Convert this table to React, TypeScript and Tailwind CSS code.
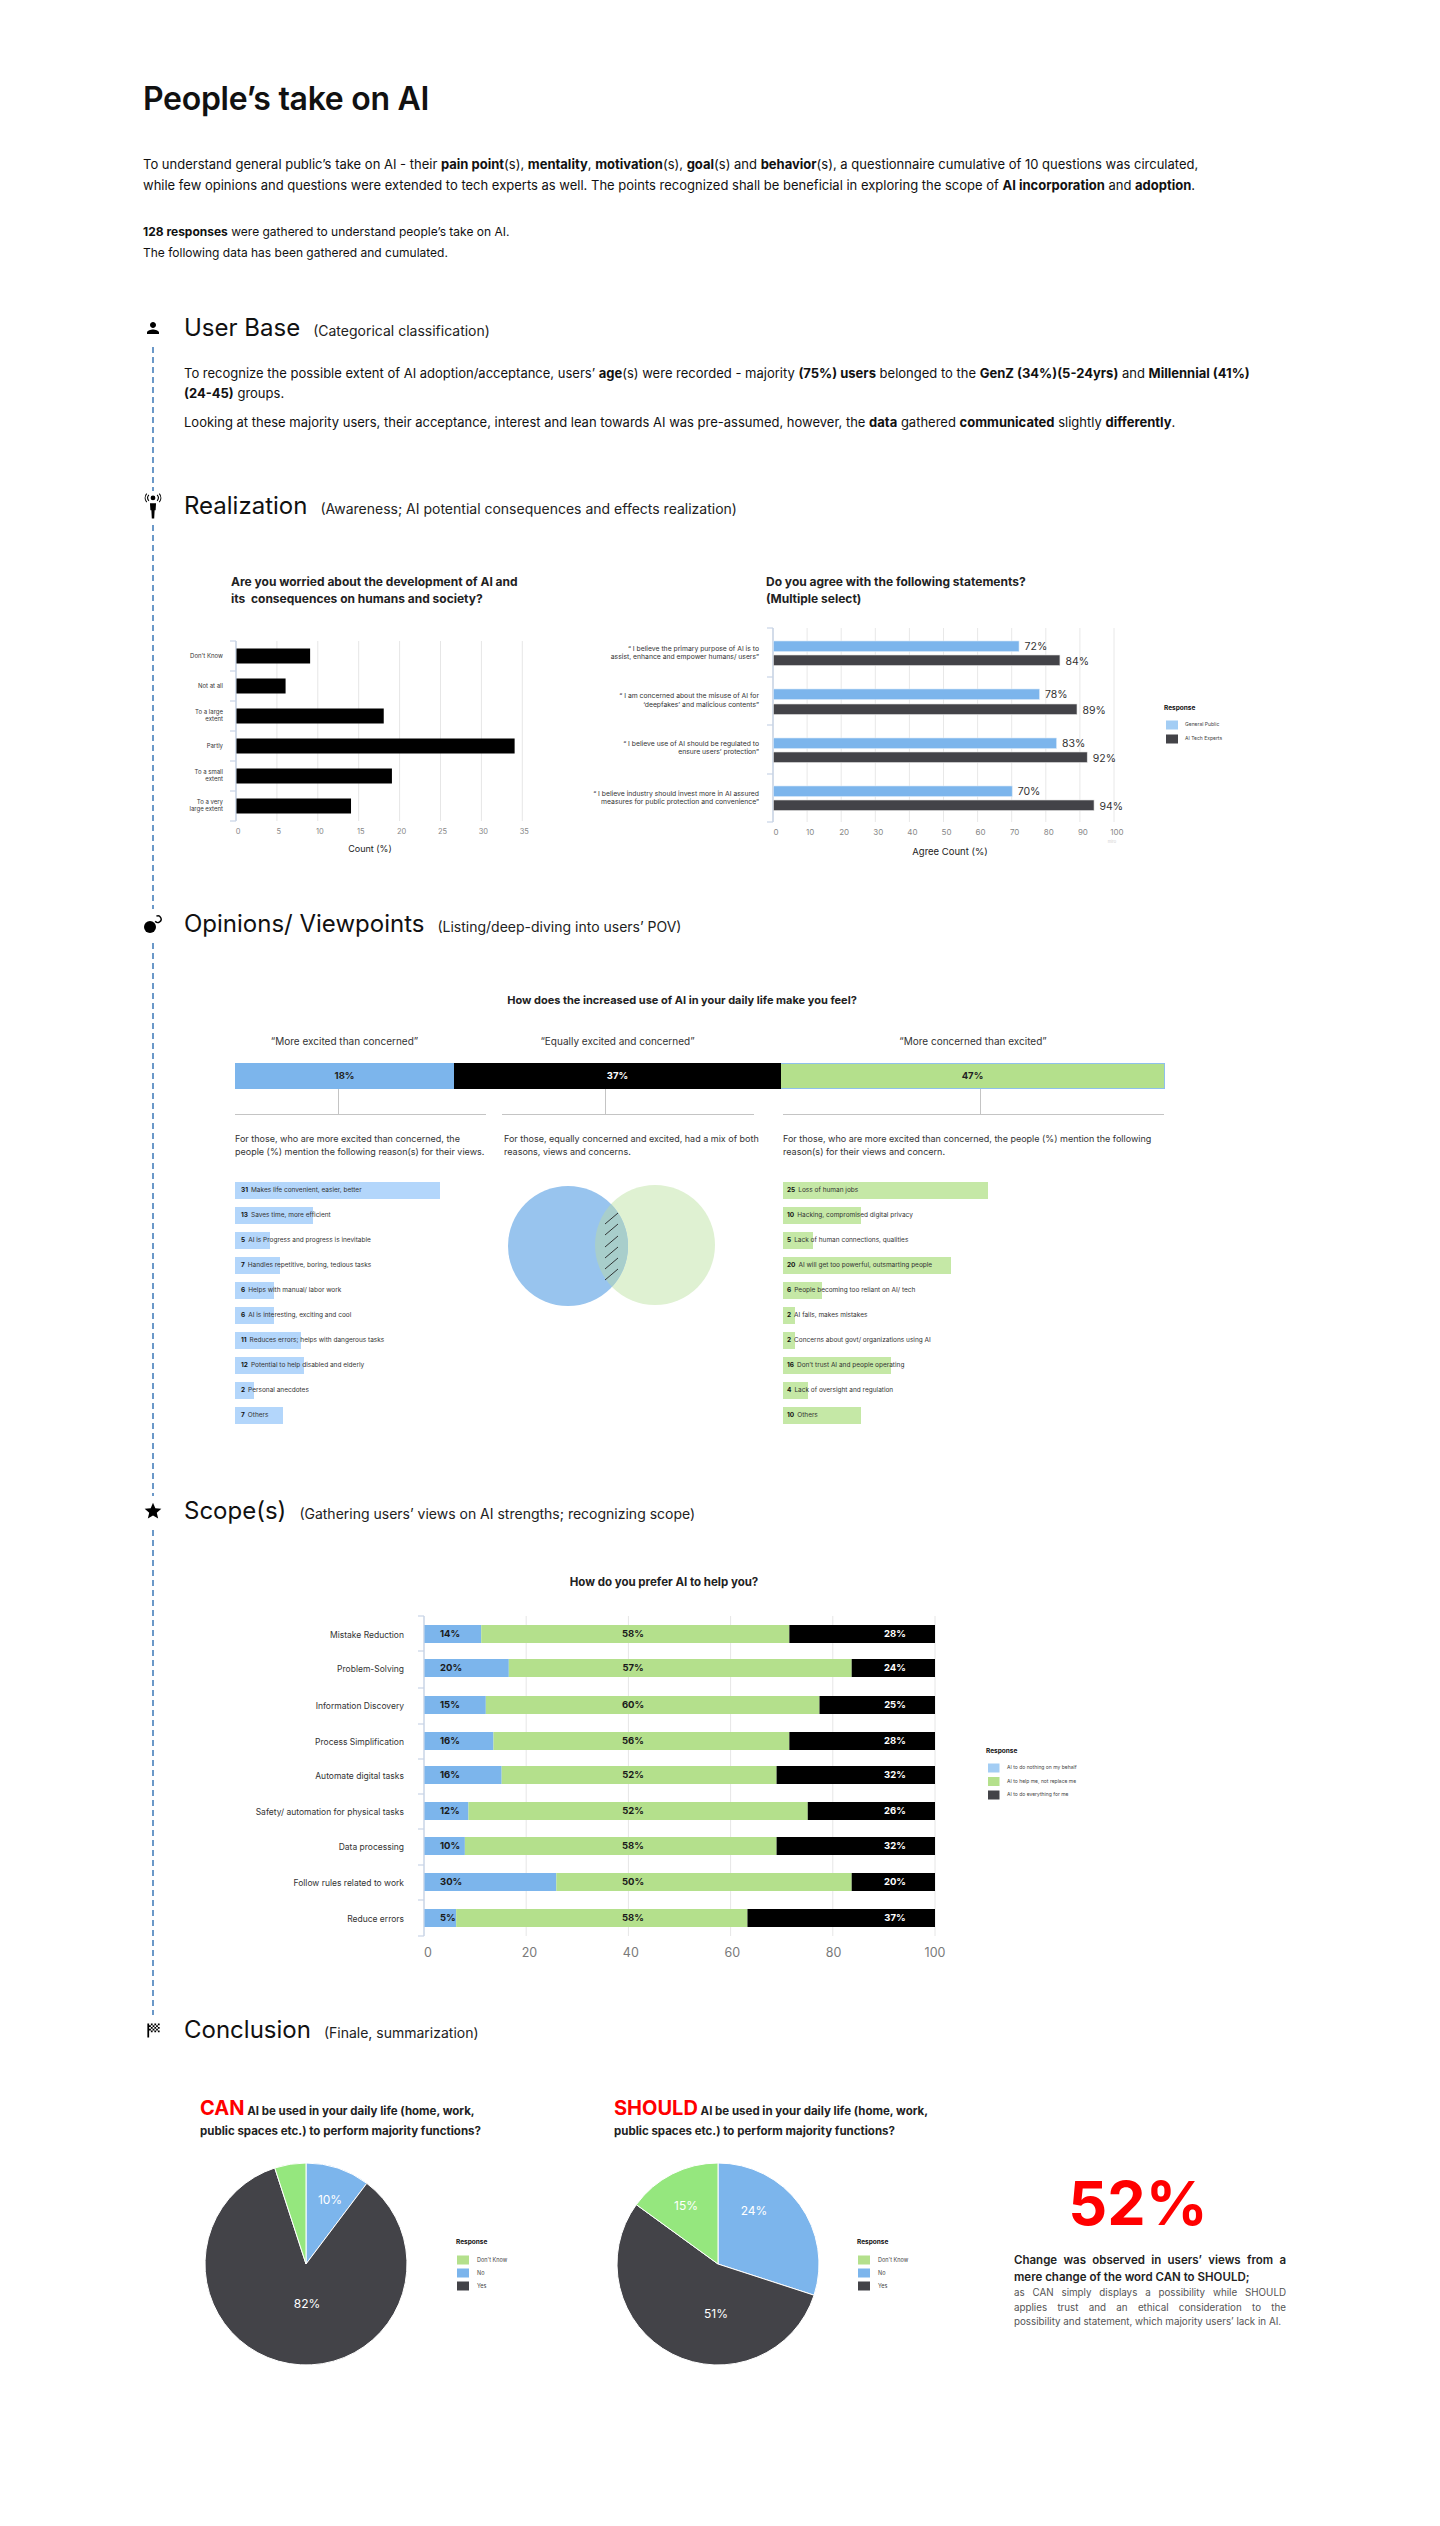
import React from "react";

const arc = (cx: number, cy: number, r: number, a0: number, a1: number) => {
  const pt = (a: number) => [cx + r * Math.sin((a * Math.PI) / 180), cy - r * Math.cos((a * Math.PI) / 180)];
  const [x0, y0] = pt(a0);
  const [x1, y1] = pt(a1);
  const large = a1 - a0 > 180 ? 1 : 0;
  return `M${cx},${cy} L${x0},${y0} A${r},${r} 0 ${large} 1 ${x1},${y1} Z`;
};

const PersonIcon = () => (
  <svg width="18" height="18" viewBox="0 0 24 24" fill="#000">
    <path d="M12 12c2.21 0 4-1.790 4-4s-1.79-4-4-4-4 1.79-4 4 1.79 4 4 4zm0 2c-2.67 0-8 1.34-8 4v2h16v-2c0-2.66-5.330-4-8-4z" />
  </svg>
);

const SignalPersonIcon = () => (
  <svg width="22" height="26" viewBox="0 0 20 24" fill="none">
    <circle cx="10" cy="4.5" r="2.2" fill="#000" />
    <path d="M6.2 1.8a4 4 0 0 0 0 5.4M4.2 0.6a6 6 0 0 0 0 7.8M13.8 1.8a4 4 0 0 1 0 5.4M15.8 0.6a6 6 0 0 1 0 7.8" stroke="#000" strokeWidth="1" />
    <path d="M7.2 9.5h5.6l-0.4 6.5h-0.9l-0.4 7.5h-2.2l-0.4-7.5h-0.9z" fill="#000" />
  </svg>
);

const BubbleIcon = () => (
  <svg width="20" height="20" viewBox="0 0 20 20" fill="none">
    <circle cx="7" cy="13" r="6" fill="#000" />
    <path d="M12.2 7.2a3.3 3.3 0 1 0 1.2-5" stroke="#000" strokeWidth="1.4" />
  </svg>
);

const StarIcon = () => (
  <svg width="20" height="20" viewBox="0 0 24 24" fill="#000">
    <path d="M12 17.27L18.18 21l-1.64-7.03L22 9.24l-7.19-.61L12 2 9.19 8.63 2 9.24l5.46 4.73L5.82 21z" />
  </svg>
);

const FlagIcon = () => (
  <svg width="21" height="21" viewBox="0 0 24 24" fill="#000">
    <path d="M11 6H9V4h2v2zm4-2h-2v2h2V4zM9 14h2v-2H9v2zm10-4V8h-2v2h2zm0 4v-2h-2v2h2zm-6 0h2v-2h-2v2zm6-10h-2v2h2V4zm-6 4V6h-2v2h2zM7 10V8h2V6H7V4H5v16h2v-8h2v-2H7zm8 2h2v-2h-2v2zm-4-2v2h2v-2h-2zM9 8v2h2V8H9zm4 2h2V8h-2v2zm2-4v2h2V6h-2z" />
  </svg>
);

function Section({ icon, last, children }: { icon: React.ReactNode; last?: boolean; children: React.ReactNode }) {
  return (
    <div className="flex">
      <div className="w-[20px] shrink-0 flex flex-col items-center">
        <div className="h-[30px] flex items-center justify-center">{icon}</div>
        {!last && (
          <div className="flex-1 mt-[4px] w-[1.5px] bg-[repeating-linear-gradient(to_bottom,#6b98c8_0px,#6b98c8_6px,transparent_6px,transparent_10px)]" />
        )}
      </div>
      <div className="ml-[21px] flex-1">{children}</div>
    </div>
  );
}

function Heading({ title, sub }: { title: string; sub: string }) {
  return (
    <div className="flex items-baseline gap-[13px] h-[30px]">
      <h2 className="text-[24px] leading-[30px] font-normal text-[#111]">{title}</h2>
      <span className="text-[14px] text-[#222]">{sub}</span>
    </div>
  );
}

const worried = [
  { l: ["Don't Know"], v: 9 },
  { l: ["Not at all"], v: 6 },
  { l: ["To a large", "extent"], v: 18 },
  { l: ["Partly"], v: 34 },
  { l: ["To a small", "extent"], v: 19 },
  { l: ["To a very", "large extent"], v: 14 },
];

const agree = [
  { l: ["“ I believe the primary purpose of AI is to", "assist, enhance and empower humans/ users”"], g: 72, e: 84, bt: 641, dt: 655, ly: [649, 657] },
  { l: ["“ I am concerned about the misuse of AI for", "‘deepfakes’ and malicious contents”"], g: 78, e: 89, bt: 689, dt: 704, ly: [696, 705] },
  { l: ["“ I believe use of AI should be regulated to", "ensure users’ protection”"], g: 83, e: 92, bt: 738, dt: 752, ly: [744, 752] },
  { l: ["“ I believe industry should invest more in AI assured", "measures for public protection and convenience”"], g: 70, e: 94, bt: 786, dt: 800, ly: [794, 802] },
];

const excited: [number, string, number][] = [
  [31, "Makes life convenient, easier, better", 205],
  [13, "Saves time, more efficient", 78],
  [5, "AI is Progress and progress is inevitable", 35],
  [7, "Handles repetitive, boring, tedious tasks", 45],
  [6, "Helps with manual/ labor work", 39],
  [6, "AI is interesting, exciting and cool", 39],
  [11, "Reduces errors; helps with dangerous tasks", 66],
  [12, "Potential to help disabled and elderly", 69],
  [2, "Personal anecdotes", 19],
  [7, "Others", 48],
];

const concerned: [number, string, number][] = [
  [25, "Loss of human jobs", 205],
  [10, "Hacking, compromised digital privacy", 78],
  [5, "Lack of human connections, qualities", 30],
  [20, "AI will get too powerful, outsmarting people", 168],
  [6, "People becoming too reliant on AI/ tech", 39],
  [2, "AI fails, makes mistakes", 12],
  [2, "Concerns about govt/ organizations using AI", 12],
  [16, "Don’t trust AI and people operating", 108],
  [4, "Lack of oversight and regulation", 25],
  [10, "Others", 78],
];

const scope: { l: string; b: number; g: number; t: number; p: [string, string, string] }[] = [
  { l: "Mistake Reduction", b: 11.1, g: 71.4, t: 1625, p: ["14%", "58%", "28%"] },
  { l: "Problem-Solving", b: 16.5, g: 83.6, t: 1659, p: ["20%", "57%", "24%"] },
  { l: "Information Discovery", b: 12.0, g: 77.3, t: 1696, p: ["15%", "60%", "25%"] },
  { l: "Process Simplification", b: 13.5, g: 71.4, t: 1732, p: ["16%", "56%", "28%"] },
  { l: "Automate digital tasks", b: 15.1, g: 68.9, t: 1766, p: ["16%", "52%", "32%"] },
  { l: "Safety/ automation for physical tasks", b: 8.6, g: 75.0, t: 1802, p: ["12%", "52%", "26%"] },
  { l: "Data processing", b: 7.9, g: 68.9, t: 1837, p: ["10%", "58%", "32%"] },
  { l: "Follow rules related to work", b: 25.8, g: 83.6, t: 1873, p: ["30%", "50%", "20%"] },
  { l: "Reduce errors", b: 6.2, g: 63.2, t: 1909, p: ["5%", "58%", "37%"] },
];

function ReasonList({ items, color, pad }: { items: [number, string, number][]; color: string; pad: string }) {
  return (
    <div className="mt-[24px] flex flex-col gap-[8px]">
      {items.map(([n, label, w], i) => (
        <div
          key={i}
          style={{ width: w, backgroundColor: color }}
          className={`h-[17px] flex items-center whitespace-nowrap text-[6.5px] text-[#333] ${pad}`}
        >
          <span className="font-bold text-[#111] mr-[3px]">{n}</span>
          {label}
        </div>
      ))}
    </div>
  );
}

function PieLegend({ x }: { x: number }) {
  const rows = [
    ["Don't Know", "#b4e08c"],
    ["No", "#7cb5ec"],
    ["Yes", "#434348"],
  ];
  return (
    <g fontFamily="Inter, sans-serif">
      <text x={x - 1} y={2239} fontSize="6.5" fontWeight="700" fill="#111" dominantBaseline="middle">Response</text>
      {rows.map(([t, c], i) => (
        <g key={t}>
          <rect x={x} y={2252.5 + i * 13} width="12" height="9" fill={c} />
          <text x={x + 20} y={2257 + i * 13} fontSize="5.5" fill="#444" dominantBaseline="middle">{t}</text>
        </g>
      ))}
    </g>
  );
}

export default function App() {
  return (
    <div className="w-[1440px] min-h-[2526px] bg-white text-[#111] font-['Inter','Noto_Sans',sans-serif]">
      <div className="pl-[143px] pt-[80px]">
        <h1 className="text-[32px] leading-[38px] font-semibold tracking-[-0.3px]">People’s take on AI</h1>
        <p className="mt-[36px] text-[13px] leading-[21px]">
          To understand general public’s take on AI - their <b>pain point</b>(s), <b>mentality</b>, <b>motivation</b>(s),{" "}
          <b>goal</b>(s) and <b>behavior</b>(s), a questionnaire cumulative of 10 questions was circulated,
          <br />
          while few opinions and questions were extended to tech experts as well. The points recognized shall be beneficial in
          exploring the scope of <b>AI incorporation</b> and <b>adoption</b>.
        </p>
        <p className="mt-[25px] text-[12px] leading-[21px]">
          <b>128 responses</b> were gathered to understand people’s take on AI.
          <br />
          The following data has been gathered and cumulated.
        </p>

        <div className="mt-[50px]">
          {/* User Base */}
          <Section icon={<PersonIcon />}>
            <div className="pb-[59px]">
              <Heading title="User Base" sub="(Categorical classification)" />
              <p className="mt-[20px] text-[13px] leading-[20px]">
                To recognize the possible extent of AI adoption/acceptance, users’ <b>age</b>(s) were recorded - majority{" "}
                <b>(75%) users</b> belonged to the <b>GenZ (34%)(5-24yrs)</b> and <b>Millennial (41%)</b>
                <br />
                <b>(24-45)</b> groups.
              </p>
              <p className="mt-[9px] text-[13px] leading-[20px]">
                Looking at these majority users, their acceptance, interest and lean towards AI was pre-assumed, however, the{" "}
                <b>data</b> gathered <b>communicated</b> slightly <b>differently</b>.
              </p>
            </div>
          </Section>

          {/* Realization */}
          <Section icon={<SignalPersonIcon />}>
            <div className="pb-[44px]">
              <Heading title="Realization" sub="(Awareness; AI potential consequences and effects realization)" />
              <div className="mt-[52px] flex">
                <div className="w-[401px]">
                  <div className="ml-[47px] text-[12px] leading-[17px] font-bold text-[#222]">
                    Are you worried about the development of AI and
                    <br />
                    its&nbsp; consequences on humans and society?
                  </div>
                  <svg className="mt-[18px] block" width="401" height="240" viewBox="184 625 401 240" fontFamily="Inter, sans-serif">
                    {[0, 5, 10, 15, 20, 25, 30, 35].map((v) => (
                      <line key={v} x1={236 + v * 8.18} x2={236 + v * 8.18} y1={641} y2={821} stroke="#e6e6e6" />
                    ))}
                    <line x1={236} x2={236} y1={641} y2={821} stroke="#c8d4e6" strokeWidth="1.5" />
                    {[641, 671, 701, 731, 761, 791, 821].map((y) => (
                      <line key={y} x1={230} x2={236} y1={y} y2={y} stroke="#c8d4e6" strokeWidth="1.2" />
                    ))}
                    {worried.map((r, i) => {
                      const c = 656 + i * 30;
                      return (
                        <g key={i}>
                          <rect x={236.5} y={c - 7.5} width={r.v * 8.18} height={15} fill="#000" />
                          {r.l.map((t, j) => (
                            <text
                              key={j}
                              x={223}
                              y={c + (j - (r.l.length - 1) / 2) * 7}
                              fontSize="6"
                              fill="#333"
                              textAnchor="end"
                              dominantBaseline="middle"
                            >
                              {t}
                            </text>
                          ))}
                        </g>
                      );
                    })}
                    {[0, 5, 10, 15, 20, 25, 30, 35].map((v) => (
                      <text key={v} x={238 + v * 8.18} y={832} fontSize="7.5" fill="#888" textAnchor="middle" dominantBaseline="middle">
                        {v}
                      </text>
                    ))}
                    <text x={370} y={850} fontSize="9" fill="#222" textAnchor="middle" dominantBaseline="middle">
                      Count (%)
                    </text>
                  </svg>
                </div>
                <div className="w-[660px]">
                  <div className="ml-[181px] text-[12px] leading-[17px] font-bold text-[#222]">
                    Do you agree with the following statements?
                    <br />
                    (Multiple select)
                  </div>
                  <svg className="mt-[18px] block" width="660" height="240" viewBox="585 625 660 240" fontFamily="Inter, sans-serif">
                    {[0, 10, 20, 30, 40, 50, 60, 70, 80, 90, 100].map((v) => (
                      <line key={v} x1={773 + v * 3.41} x2={773 + v * 3.41} y1={628} y2={822} stroke="#e8e8e8" />
                    ))}
                    <line x1={773} x2={773} y1={628} y2={822} stroke="#c8d4e6" strokeWidth="1.5" />
                    {[628, 677, 725, 774, 822].map((y) => (
                      <line key={y} x1={767} x2={773} y1={y} y2={y} stroke="#c8d4e6" strokeWidth="1.2" />
                    ))}
                    {agree.map((r, i) => (
                      <g key={i}>
                        <rect x={773.5} y={r.bt} width={r.g * 3.41} height={10.5} fill="#7cb5ec" stroke="#d7e8f8" strokeWidth="0.6" />
                        <rect x={773.5} y={r.dt} width={r.e * 3.41} height={10.5} fill="#434348" stroke="#e2e2e2" strokeWidth="0.6" />
                        <text x={773 + r.g * 3.41 + 6} y={r.bt + 6} fontSize="10.5" fill="#333" dominantBaseline="middle">
                          {r.g}%
                        </text>
                        <text x={773 + r.e * 3.41 + 6} y={r.dt + 7} fontSize="10.5" fill="#333" dominantBaseline="middle">
                          {r.e}%
                        </text>
                        {r.l.map((t, j) => (
                          <text key={j} x={759} y={r.ly[j]} fontSize="6.8" fill="#333" textAnchor="end" dominantBaseline="middle">
                            {t}
                          </text>
                        ))}
                      </g>
                    ))}
                    {[0, 10, 20, 30, 40, 50, 60, 70, 80, 90, 100].map((v) => (
                      <text key={v} x={776 + v * 3.41} y={833} fontSize="8" fill="#888" textAnchor="middle" dominantBaseline="middle">
                        {v}
                      </text>
                    ))}
                    <text x={1112} y={843} fontSize="4" fill="#d0d0d0" textAnchor="middle">miro</text>
                    <text x={950} y={852} fontSize="9.5" fill="#222" textAnchor="middle" dominantBaseline="middle">
                      Agree Count (%)
                    </text>
                    <text x={1164} y={708} fontSize="6.5" fontWeight="700" fill="#111" dominantBaseline="middle">Response</text>
                    <rect x={1166} y={720.5} width="12" height="9" fill="#a3cdf4" />
                    <text x={1185} y={725} fontSize="5" fill="#444" dominantBaseline="middle">General Public</text>
                    <rect x={1166} y={734.5} width="12" height="9" fill="#434348" />
                    <text x={1185} y={739} fontSize="5" fill="#444" dominantBaseline="middle">AI Tech Experts</text>
                  </svg>
                </div>
              </div>
            </div>
          </Section>

          {/* Opinions */}
          <Section icon={<BubbleIcon />}>
            <div className="pb-[72px]">
              <Heading title="Opinions/ Viewpoints" sub="(Listing/deep-diving into users’ POV)" />
              <div className="ml-[51px]">
                <div className="mt-[53px] w-[894px] text-center text-[11px] leading-[16px] font-bold text-[#222]">
                  How does the increased use of AI in your daily life make you feel?
                </div>
                <div className="mt-[26px] flex text-[10px] leading-[14px] text-[#333] text-center">
                  <div className="w-[219px]">“More excited than concerned”</div>
                  <div className="w-[327px]">“Equally excited and concerned”</div>
                  <div className="w-[384px]">“More concerned than excited”</div>
                </div>
                <div className="mt-[15px] flex h-[26px] text-[9.5px] font-bold">
                  <div className="w-[219px] bg-[#7cb5ec] flex items-center justify-center text-[#222]">18%</div>
                  <div className="w-[327px] bg-black flex items-center justify-center text-white">37%</div>
                  <div className="w-[384px] bg-[#b4e08c] border-y border-r border-[#8fc0ec] flex items-center justify-center text-[#222]">
                    47%
                  </div>
                </div>
                <div className="flex">
                  <div className="w-[251px] h-[26px] border-b border-[#c4c4c4]">
                    <div className="ml-[103px] w-px h-full bg-[#c4c4c4]" />
                  </div>
                  <div className="ml-[16px] w-[252px] h-[26px] border-b border-[#c4c4c4]">
                    <div className="ml-[103px] w-px h-full bg-[#c4c4c4]" />
                  </div>
                  <div className="ml-[29px] w-[381px] h-[26px] border-b border-[#c4c4c4]">
                    <div className="ml-[197px] w-px h-full bg-[#c4c4c4]" />
                  </div>
                </div>
                <div className="mt-[17px] flex">
                  <div className="w-[269px]">
                    <p className="h-[26px] text-[9px] leading-[13px] text-[#333]">
                      For those, who are more excited than concerned, the
                      <br />
                      people (%) mention the following reason(s) for their views.
                    </p>
                    <ReasonList items={excited} color="#b3d6fb" pad="pl-[6px]" />
                  </div>
                  <div className="w-[279px]">
                    <p className="h-[26px] text-[9px] leading-[13px] text-[#333]">
                      For those, equally concerned and excited, had a mix of both
                      <br />
                      reasons, views and concerns.
                    </p>
                    <svg className="mt-[22px] block" width="279" height="135" viewBox="504 1180 279 135">
                      <defs>
                        <clipPath id="leftc">
                          <circle cx={568} cy={1246} r={60} />
                        </clipPath>
                      </defs>
                      <circle cx={655} cy={1245} r={60} fill="#dff1d2" />
                      <circle cx={568} cy={1246} r={60} fill="#98c4ee" />
                      <circle cx={655} cy={1245} r={60} fill="#a8cecb" clipPath="url(#leftc)" />
                      {[1213, 1224, 1236, 1247, 1258, 1269].map((y) => (
                        <line key={y} x1={605} y1={y + 11} x2={618} y2={y} stroke="#222" strokeWidth="0.9" />
                      ))}
                    </svg>
                  </div>
                  <div className="w-[382px]">
                    <p className="h-[26px] text-[9px] leading-[13px] text-[#333]">
                      For those, who are more excited than concerned, the people (%) mention the following
                      <br />
                      reason(s) for their views and concern.
                    </p>
                    <ReasonList items={concerned} color="#c5e8a6" pad="pl-[4px]" />
                  </div>
                </div>
              </div>
            </div>
          </Section>

          {/* Scope */}
          <Section icon={<StarIcon />}>
            <div className="pb-[45px]">
              <Heading title="Scope(s)" sub="(Gathering users’ views on AI strengths; recognizing scope)" />
              <div className="mt-[48px] w-[960px] text-center text-[11.5px] leading-[16px] font-bold text-[#222]">
                How do you prefer AI to help you?
              </div>
              <svg className="mt-[10px] block" width="960" height="370" viewBox="184 1600 960 370" fontFamily="Inter, sans-serif">
                {[20, 40, 60, 80, 100].map((v) => (
                  <line key={v} x1={424 + v * 5.11} x2={424 + v * 5.11} y1={1616} y2={1936} stroke="#e6e6e6" />
                ))}
                <line x1={424} x2={424} y1={1616} y2={1936} stroke="#c8d4e6" strokeWidth="1.5" />
                {[1616, 1651, 1688, 1724, 1759, 1794, 1829, 1865, 1900, 1936].map((y) => (
                  <line key={y} x1={418} x2={424} y1={y} y2={y} stroke="#c8d4e6" strokeWidth="1.2" />
                ))}
                {scope.map((r) => {
                  const xb = 424.5 + r.b * 5.11;
                  const xg = 424.5 + r.g * 5.11;
                  const c = r.t + 9;
                  return (
                    <g key={r.l}>
                      <rect x={424.5} y={r.t} width={xb - 424.5} height={18} fill="#7cb5ec" />
                      <rect x={xb} y={r.t} width={xg - xb} height={18} fill="#b4e08c" />
                      <rect x={xg} y={r.t} width={935 - xg} height={18} fill="#000" />
                      <text x={440} y={c + 0.5} fontSize="9.5" fontWeight="700" fill="#1a1a1a" dominantBaseline="middle">
                        {r.p[0]}
                      </text>
                      <text x={633} y={c + 0.5} fontSize="9.5" fontWeight="700" fill="#1a1a1a" textAnchor="middle" dominantBaseline="middle">
                        {r.p[1]}
                      </text>
                      <text x={895} y={c + 0.5} fontSize="9.5" fontWeight="700" fill="#fff" textAnchor="middle" dominantBaseline="middle">
                        {r.p[2]}
                      </text>
                      <text x={404} y={c + 2} fontSize="8.5" fill="#333" textAnchor="end" dominantBaseline="middle">
                        {r.l}
                      </text>
                    </g>
                  );
                })}
                {[0, 20, 40, 60, 80, 100].map((v) => (
                  <text key={v} x={428 + v * 5.07} y={1954} fontSize="12.5" fill="#7a7a7a" textAnchor="middle" dominantBaseline="middle">
                    {v}
                  </text>
                ))}
                <text x={986} y={1751} fontSize="6.5" fontWeight="700" fill="#111" dominantBaseline="middle">Response</text>
                {[
                  ["AI to do nothing on my behalf", "#a3cdf4"],
                  ["AI to help me, not replace me", "#b4e08c"],
                  ["AI to do everything for me", "#434348"],
                ].map(([t, c], i) => (
                  <g key={t}>
                    <rect x={988} y={1763.5 + i * 13.5} width="11.5" height="9" fill={c} />
                    <text x={1007} y={1768 + i * 13.5} fontSize="5" fill="#444" dominantBaseline="middle">
                      {t}
                    </text>
                  </g>
                ))}
              </svg>
            </div>
          </Section>

          {/* Conclusion */}
          <Section icon={<FlagIcon />} last>
            <Heading title="Conclusion" sub="(Finale, summarization)" />
            <div className="mt-[53px] ml-[16px] flex items-start">
              <div className="w-[414px]">
                <div className="text-[11.5px] leading-[20px] font-bold text-[#222]">
                  <span className="text-[20px] text-[#ff0000]">CAN</span> AI be used in your daily life (home, work,
                  <br />
                  public spaces etc.) to perform majority functions?
                </div>
                <svg className="mt-[12px] block" width="414" height="230" viewBox="200 2150 414 230" fontFamily="Inter, sans-serif">
                  <path d={arc(306, 2261, 101, 0, 37)} fill="#7cb5ec" stroke="#fff" strokeWidth="1" />
                  <path d={arc(306, 2261, 101, 37, 342)} fill="#434348" stroke="#fff" strokeWidth="1" />
                  <path d={arc(306, 2261, 101, 342, 360)} fill="#95e77e" stroke="#fff" strokeWidth="1" />
                  <text x={330} y={2198} fontSize="12" fill="#fff" textAnchor="middle" dominantBaseline="middle">10%</text>
                  <text x={307} y={2302} fontSize="12" fill="#fff" textAnchor="middle" dominantBaseline="middle">82%</text>
                  <PieLegend x={457} />
                </svg>
              </div>
              <div className="w-[400px]">
                <div className="text-[11.5px] leading-[20px] font-bold text-[#222]">
                  <span className="text-[20px] text-[#ff0000]">SHOULD</span> AI be used in your daily life (home, work,
                  <br />
                  public spaces etc.) to perform majority functions?
                </div>
                <svg className="mt-[12px] block" width="400" height="230" viewBox="614 2150 400 230" fontFamily="Inter, sans-serif">
                  <path d={arc(718, 2261, 101, 0, 108)} fill="#7cb5ec" stroke="#fff" strokeWidth="1" />
                  <path d={arc(718, 2261, 101, 108, 306)} fill="#434348" stroke="#fff" strokeWidth="1" />
                  <path d={arc(718, 2261, 101, 306, 360)} fill="#95e77e" stroke="#fff" strokeWidth="1" />
                  <text x={686} y={2204} fontSize="12" fill="#fff" textAnchor="middle" dominantBaseline="middle">15%</text>
                  <text x={754} y={2209} fontSize="12" fill="#fff" textAnchor="middle" dominantBaseline="middle">24%</text>
                  <text x={716} y={2312} fontSize="12" fill="#fff" textAnchor="middle" dominantBaseline="middle">51%</text>
                  <PieLegend x={858} />
                </svg>
              </div>
              <div className="w-[272px] mt-[73px]">
                <div className="mr-[24px] text-center text-[61px] leading-[64px] font-bold text-[#ff0000]">52%</div>
                <div className="mt-[17px] text-[11.5px] leading-[17px] font-semibold text-[#222]">
                  <span className="block text-justify [text-align-last:justify]">Change was observed in users’ views from a</span>
                  <span className="block">mere change of the word CAN to SHOULD;</span>
                </div>
                <div className="text-[9.8px] leading-[14.5px] text-[#555]">
                  <span className="block text-justify [text-align-last:justify]">as CAN simply displays a possibility while SHOULD</span>
                  <span className="block text-justify [text-align-last:justify]">applies trust and an ethical consideration to the</span>
                  <span className="block whitespace-nowrap">possibility and statement, which majority users’ lack in AI.</span>
                </div>
              </div>
            </div>
          </Section>
        </div>
      </div>
    </div>
  );
}
